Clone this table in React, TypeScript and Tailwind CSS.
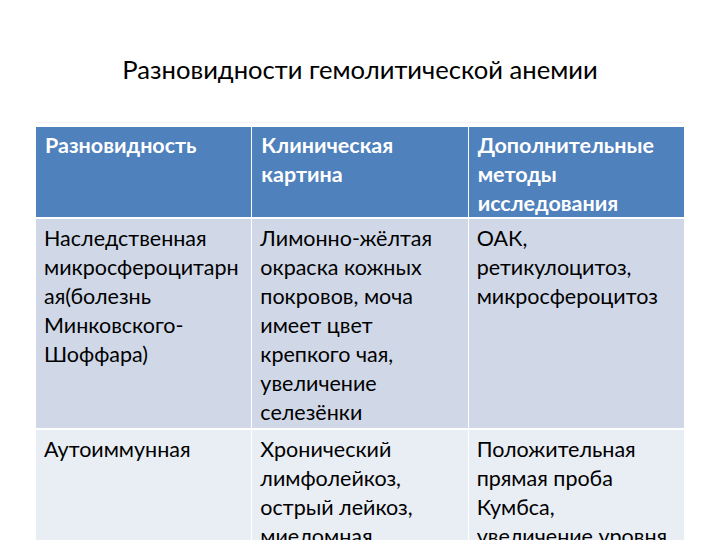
const header = [
  ['Разновидность'],
  ['Клиническая', 'картина'],
  ['Дополнительные', 'методы', 'исследования'],
];

const rows = [
  {
    bg: 'bg-[#d0d8e8]',
    cells: [
      ['Наследственная', 'микросфероцитарн', 'ая(болезнь', 'Минковского-', 'Шоффара)'],
      ['Лимонно-жёлтая', 'окраска кожных', 'покровов, моча', 'имеет цвет', 'крепкого чая,', 'увеличение', 'селезёнки'],
      ['ОАК,', 'ретикулоцитоз,', 'микросфероцитоз'],
    ],
  },
  {
    bg: 'bg-[#e9edf4]',
    cells: [
      ['Аутоиммунная'],
      ['Хронический', 'лимфолейкоз,', 'острый лейкоз,', 'миеломная', 'болезнь'],
      ['Положительная', 'прямая проба', 'Кумбса,', 'увеличение уровня', 'билирубина'],
    ],
  },
];

function Lines({ lines }: { lines: string[] }) {
  return (
    <>
      {lines.map((l, i) => (
        <div key={i} className="whitespace-nowrap">{l}</div>
      ))}
    </>
  );
}

export default function App() {
  return (
    <div
      className="w-[720px] h-[540px] overflow-hidden bg-white"
      style={{ fontFamily: 'Lato, "Open Sans", sans-serif' }}
    >
      <div className="pt-[52px] text-center text-[25.6px] leading-[34px] text-black">
        Разновидности гемолитической анемии
      </div>

      <div className="mx-[36px] mt-[36px] border-t border-[#eef1f6] pt-[4px]">
        <div className="grid grid-cols-3 gap-x-[1px] bg-white text-[21.5px] leading-[29px]">
          {header.map((c, i) => (
            <div key={i} className="bg-[#4f81bd] h-[90px] pl-[9px] pt-[4px] font-bold text-white">
              <Lines lines={c} />
            </div>
          ))}
        </div>
        {rows.map((r, ri) => (
          <div key={ri} className="grid grid-cols-3 gap-x-[1px] mt-[2px] bg-white text-[21.5px] leading-[29px] text-black">
            {r.cells.map((c, i) => (
              <div key={i} className={`${r.bg} overflow-hidden pl-[8px] pt-[5px] pb-[1px]`}>
                <Lines lines={c} />
              </div>
            ))}
          </div>
        ))}
      </div>
    </div>
  );
}
